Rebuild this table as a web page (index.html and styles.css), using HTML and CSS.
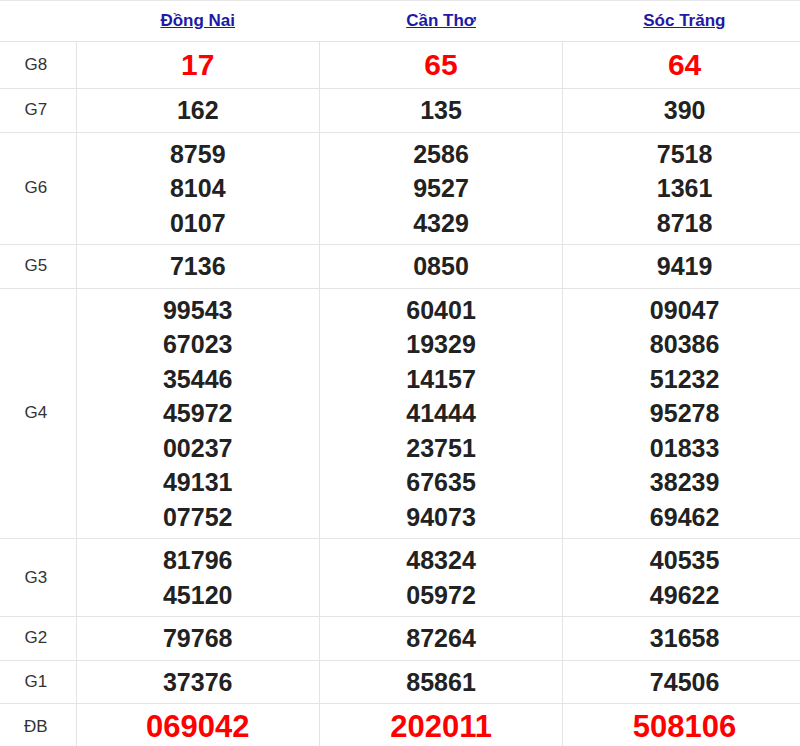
FILE: index.html
```html
<!DOCTYPE html>
<html lang="vi">
<head>
<meta charset="utf-8">
<title>Kết quả xổ số</title>
<link rel="stylesheet" href="styles.css">
</head>
<body>
<table class="kq">
  <colgroup>
    <col class="c-label">
    <col class="c-prov">
    <col class="c-prov">
    <col class="c-prov">
  </colgroup>
  <thead>
    <tr>
      <th></th>
      <th><a href="#">Đồng Nai</a></th>
      <th><a href="#">Cần Thơ</a></th>
      <th><a href="#">Sóc Trăng</a></th>
    </tr>
  </thead>
  <tbody>
    <tr class="big">
      <td class="lbl">G8</td>
      <td><div class="n red">17</div></td>
      <td><div class="n red">65</div></td>
      <td><div class="n red">64</div></td>
    </tr>
    <tr>
      <td class="lbl">G7</td>
      <td><div class="n">162</div></td>
      <td><div class="n">135</div></td>
      <td><div class="n">390</div></td>
    </tr>
    <tr>
      <td class="lbl">G6</td>
      <td><div class="n">8759</div><div class="n">8104</div><div class="n">0107</div></td>
      <td><div class="n">2586</div><div class="n">9527</div><div class="n">4329</div></td>
      <td><div class="n">7518</div><div class="n">1361</div><div class="n">8718</div></td>
    </tr>
    <tr>
      <td class="lbl">G5</td>
      <td><div class="n">7136</div></td>
      <td><div class="n">0850</div></td>
      <td><div class="n">9419</div></td>
    </tr>
    <tr>
      <td class="lbl">G4</td>
      <td><div class="n">99543</div><div class="n">67023</div><div class="n">35446</div><div class="n">45972</div><div class="n">00237</div><div class="n">49131</div><div class="n">07752</div></td>
      <td><div class="n">60401</div><div class="n">19329</div><div class="n">14157</div><div class="n">41444</div><div class="n">23751</div><div class="n">67635</div><div class="n">94073</div></td>
      <td><div class="n">09047</div><div class="n">80386</div><div class="n">51232</div><div class="n">95278</div><div class="n">01833</div><div class="n">38239</div><div class="n">69462</div></td>
    </tr>
    <tr>
      <td class="lbl">G3</td>
      <td><div class="n">81796</div><div class="n">45120</div></td>
      <td><div class="n">48324</div><div class="n">05972</div></td>
      <td><div class="n">40535</div><div class="n">49622</div></td>
    </tr>
    <tr>
      <td class="lbl">G2</td>
      <td><div class="n">79768</div></td>
      <td><div class="n">87264</div></td>
      <td><div class="n">31658</div></td>
    </tr>
    <tr>
      <td class="lbl">G1</td>
      <td><div class="n">37376</div></td>
      <td><div class="n">85861</div></td>
      <td><div class="n">74506</div></td>
    </tr>
    <tr class="big">
      <td class="lbl">ĐB</td>
      <td><div class="n red db">069042</div></td>
      <td><div class="n red db">202011</div></td>
      <td><div class="n red db">508106</div></td>
    </tr>
  </tbody>
</table>
</body>
</html>
```

FILE: styles.css
```css
html, body {
  margin: 0;
  padding: 0;
  background: #fff;
  overflow: hidden;
}

body {
  font-family: "Liberation Sans", Arial, sans-serif;
  color: #222;
}

.kq {
  width: 806px;
  table-layout: fixed;
  border-collapse: collapse;
  border-top: 1px solid #e8e8e8;
}

.c-label { width: 76px; }
.c-prov { width: 243px; }

.kq th {
  height: 40px;
  padding: 0;
  text-align: center;
  vertical-align: middle;
  border-bottom: 1px solid #e4e4e4;
  font-weight: bold;
}

.kq th a {
  font-size: 17px;
  color: #1e1aa6;
  text-decoration: underline;
}

.kq td {
  padding: 4px 0;
  text-align: center;
  vertical-align: middle;
  border-bottom: 1px solid #e4e4e4;
  border-left: 1px solid #e4e4e4;
}

.kq td.lbl {
  border-left: none;
  padding-right: 4px;
  font-size: 17px;
  color: #333;
}

.n {
  font-size: 25px;
  line-height: 34.5px;
  font-weight: bold;
  color: #222;
}

.n.red {
  color: #ff0000;
  font-size: 30px;
  line-height: 38px;
}

.n.db {
  font-size: 31px;
}
```
